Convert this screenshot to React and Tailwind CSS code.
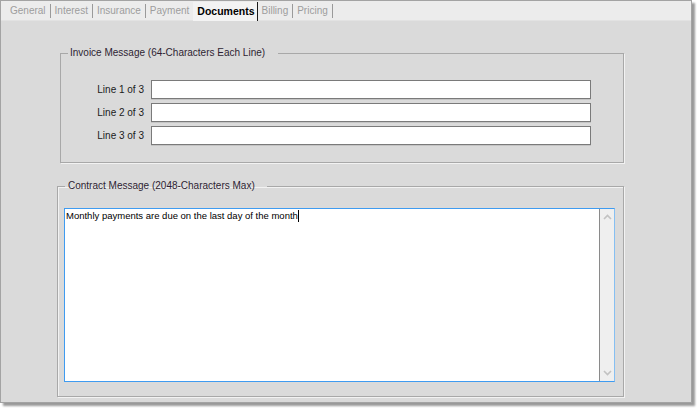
const tabs = [
  { label: 'General' },
  { label: 'Interest' },
  { label: 'Insurance' },
  { label: 'Payment', noSep: true },
  { label: 'Documents', active: true },
  { label: 'Billing' },
  { label: 'Pricing' },
];

const lines = ['Line 1 of 3', 'Line 2 of 3', 'Line 3 of 3'];

function Chevron({ up }) {
  return (
    <svg width="9" height="6" viewBox="0 0 9 6" className="block">
      <polyline
        points={up ? '1,5 4.5,1.5 8,5' : '1,1 4.5,4.5 8,1'}
        fill="none"
        stroke="#c2c2c2"
        strokeWidth="1.6"
      />
    </svg>
  );
}

export default function App() {
  return (
    <div
      className="w-[698px] h-[409px] bg-white text-[10px] leading-[12px] text-[#1a1a1a]"
      style={{ fontFamily: '"Liberation Sans", Arial, sans-serif' }}
    >
      <div className="w-[692px] h-[403px] flex flex-col border border-[#a3a3a3] bg-[#dadada] shadow-[3px_3px_2px_rgba(0,0,0,0.4)]">
        {/* tab strip */}
        <div className="h-[20px] flex items-center pl-[5px] pt-[1px] bg-[#ececec] border-b border-[#e2e2e2]">
          {tabs.map(t =>
            t.active ? (
              <span
                key={t.label}
                className="h-[19px] flex items-center pl-[4px] pr-[2px] bg-[#f3f3f3] border-r border-[#1a1a1a] font-bold text-[10.5px] text-black"
              >
                {t.label}
              </span>
            ) : (
              <span key={t.label} className="flex items-center">
                <span className="px-[4px] text-[#9d9d9d]">{t.label}</span>
                {!t.noSep && <span className="w-px h-[14px] bg-[#9a9a9a]" />}
              </span>
            )
          )}
        </div>

        {/* body */}
        <div className="flex-1 flex flex-col pt-[26px]">
          <fieldset className="ml-[59px] w-[564px] h-[116px] border border-[#a8a8a8] shadow-[1px_1px_0_#f2f2f2]">
            <legend className="ml-[7px] pl-[2px] pr-[13px] text-[#2e1f33]">
              Invoice Message (64-Characters Each Line)
            </legend>
            <div className="flex flex-col gap-[4px] pt-[21px]">
              {lines.map(l => (
                <div key={l} className="flex items-center">
                  <span className="w-[84px] text-right pr-[1px]">{l}</span>
                  <div className="ml-[6px] w-[440px] h-[19px] bg-white border border-[#7a7a7a] shadow-[0_1px_0_#c4c4c4]" />
                </div>
              ))}
            </div>
          </fieldset>

          <fieldset className="mt-[17px] ml-[56px] w-[567px] h-[217px] border border-[#a8a8a8] shadow-[1px_1px_0_#f2f2f2,inset_1px_1px_0_#f2f2f2]">
            <legend className="ml-[7px] pl-[3px] pr-[12px] text-[#2e1f33]">
              Contract Message (2048-Characters Max)
            </legend>
            <div className="mt-[16px] ml-[6px] w-[551px] h-[174px] flex bg-white border border-[#3f9bf0] border-r-[#86bff2]">
              <div className="flex-1 pl-[1px] pt-[1px]">
                <span className="inline-flex items-center text-[9.5px] text-black">
                  Monthly payments are due on the last day of the month
                  <span className="inline-block w-px h-[12px] bg-black" />
                </span>
              </div>
              <div className="w-[15px] flex flex-col items-center justify-between bg-[#efefef] border-l border-[#8a8a8a] py-[5px]">
                <Chevron up />
                <Chevron />
              </div>
            </div>
          </fieldset>
        </div>
      </div>
    </div>
  );
}
